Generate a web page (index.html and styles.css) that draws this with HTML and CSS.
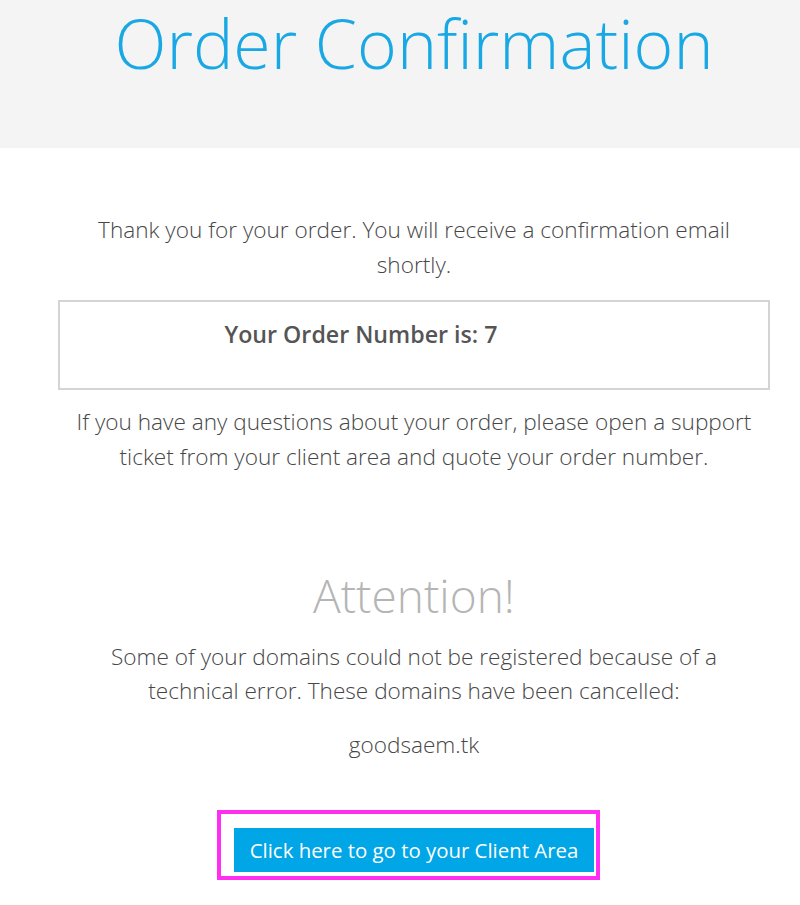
FILE: index.html
```html
<!DOCTYPE html>
<html lang="en">
<head>
<meta charset="utf-8">
<title>Order Confirmation</title>
<link rel="stylesheet" href="styles.css">
</head>
<body>
<header class="hero">
  <h1 class="hero-title">Order Confirmation</h1>
</header>
<main class="content">
  <p class="lead">Thank you for your order. You will receive a confirmation email shortly.</p>
  <div class="order-box">
    <p class="order-number">Your Order Number is: <span class="num">771234567<span class="redact"></span></span></p>
  </div>
  <p class="lead">If you have any questions about your order, please open a support ticket from your client area and quote your order number.</p>
  <section class="attention">
    <h2 class="attention-title">Attention!</h2>
    <p class="lead">Some of your domains could not be registered because of a technical error. These domains have been cancelled:</p>
    <p class="lead domain">goodsaem.tk</p>
  </section>
  <div class="actions">
    <div class="highlight">
      <a class="btn" href="#">Click here to go to your Client Area</a>
    </div>
  </div>
</main>
</body>
</html>
```
FILE: styles.css
```css
html, body {
  margin: 0;
  padding: 0;
  background: #ffffff;
}
body {
  font-family: "Open Sans", "Liberation Sans", sans-serif;
  font-weight: 300;
  color: #474747;
}
.hero {
  background: #f4f4f4;
  height: 148px;
  text-align: center;
  padding-left: 28px;
}
.hero-title {
  margin: 0;
  font-size: 68px;
  line-height: 86px;
  font-weight: 300;
  color: #1aa8e4;
  white-space: nowrap;
}
.content {
  width: 712px;
  margin: 0 0 0 58px;
  padding-top: 64px;
  text-align: center;
}
.lead {
  font-size: 22.6px;
  line-height: 35px;
  margin: 0 15px;
}
.order-box {
  border: 2px solid #d4d4d4;
  margin: 18px 0 14px;
  box-sizing: border-box;
  height: 90px;
  padding-top: 16px;
}
.order-number {
  margin: 0;
  font-size: 23.2px;
  line-height: 32px;
  font-weight: 600;
  color: #555;
}
.num {
  position: relative;
}
.redact {
  position: absolute;
  left: 13px;
  top: -4px;
  width: 140px;
  height: 40px;
  background: #fff;
}
.attention {
  margin: 0 auto;
  padding-top: 88px;
}
.attention-title {
  margin: 0 0 12px;
  font-size: 46px;
  line-height: 66px;
  font-weight: 300;
  color: #b5b5b5;
}
.attention .lead {
  line-height: 34px;
}
.attention .domain {
  margin-top: 20px;
}
.actions {
  display: flex;
  justify-content: center;
  margin-top: 48px;
}
.highlight {
  border: 4px solid #ff2ef0;
  padding: 14px 2px 4px 13px;
  margin-right: 11px;
}
.btn {
  display: block;
  background: #00a6e6;
  color: #fff;
  text-decoration: none;
  font-weight: 400;
  font-size: 20.4px;
  line-height: 44px;
  padding: 0 16px;
}
```
